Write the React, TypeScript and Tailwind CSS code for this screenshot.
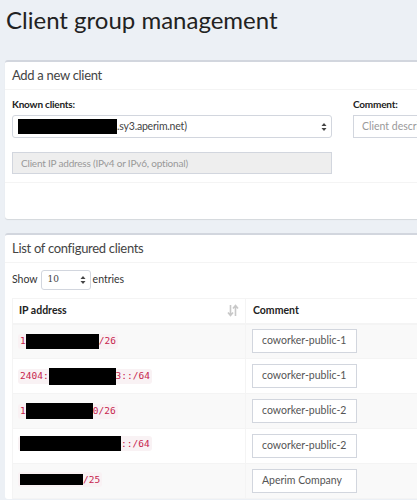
const rows = [
  { pre: "1", black: 73, post: "/26", blackH: 15, comment: "coworker-public-1" },
  { pre: "2404:", black: 67, post: "3::/64", blackH: 17, comment: "coworker-public-1" },
  { pre: "1", black: 67, post: "0/26", blackH: 16, comment: "coworker-public-2" },
  { pre: "", black: 101, post: "::/64", blackH: 15, comment: "coworker-public-2" },
  { pre: "", black: 63, post: "/25", blackH: 11, comment: "Aperim Company" },
];

function SelectArrows() {
  return (
    <svg width="6" height="10" viewBox="0 0 6 10" className="shrink-0">
      <path d="M3 1 L5.5 4 L0.5 4 Z" fill="#444" />
      <path d="M3 9 L5.5 6 L0.5 6 Z" fill="#444" />
    </svg>
  );
}

function SortIcon() {
  return (
    <svg width="12" height="13" viewBox="0 0 12 13">
      <path d="M3.5 1 V11 M1 8.5 L3.5 11.5 L6 8.5" stroke="#c8c8c8" strokeWidth="1.6" fill="none" />
      <path d="M8.5 12 V2 M6 4.5 L8.5 1.5 L11 4.5" stroke="#c8c8c8" strokeWidth="1.6" fill="none" />
    </svg>
  );
}

export default function App() {
  return (
    <div
      className="w-[417px] h-[500px] overflow-hidden bg-[#ecf0f5] text-[#333]"
      style={{ fontFamily: "Lato, 'Open Sans', sans-serif" }}
    >
      <div className="w-[560px]">
        <h1 className="pl-[6px] pt-[4px] h-[60px] text-[24px] leading-[32px] text-[#222] font-normal">
          Client group management
        </h1>

        {/* add client box */}
        <div className="ml-[5px] bg-white border-t-2 border-[#d2d6de] rounded-[3px] shadow-[0_1px_1px_rgba(0,0,0,0.1)]">
          <div className="h-[28px] px-[7px] flex items-center border-b border-[#f4f4f4] text-[13px] tracking-[-0.3px] text-[#444]">
            Add a new client
          </div>
          <div className="px-[7px] pt-[7px] pb-[8px] flex gap-[21px]">
            <div className="w-[320px]">
              <div className="text-[10px] font-bold text-[#222] leading-[14px] mb-[4px] tracking-[-0.2px]">Known clients:</div>
              <div className="h-[23px] border border-[#d2d6de] rounded-[3px] flex items-center pl-[5px] pr-[4px]">
                <div className="w-[99px] h-[15px] bg-black" />
                <span className="text-[10.5px] text-[#444] flex-1 tracking-[-0.2px]">.sy3.aperim.net)</span>
                <SelectArrows />
              </div>
              <div className="mt-[14px] h-[22px] border border-[#d2d6de] bg-[#eee] flex items-center px-[8px] text-[10px] tracking-[-0.2px] text-[#999]">
                Client IP address (IPv4 or IPv6, optional)
              </div>
            </div>
            <div className="w-[180px]">
              <div className="text-[10px] font-bold text-[#222] leading-[14px] mb-[4px] tracking-[-0.2px]">Comment:</div>
              <div className="h-[23px] border border-[#d2d6de] flex items-center px-[8px] text-[10.5px] text-[#999] whitespace-nowrap overflow-hidden">
                Client description
              </div>
            </div>
          </div>
          <div className="h-[37px] border-t border-[#f4f4f4]" />
        </div>

        {/* list box */}
        <div className="ml-[5px] mt-[14px] bg-white border-t-2 border-[#d2d6de] rounded-[3px]">
          <div className="h-[28px] px-[7px] flex items-center border-b border-[#f4f4f4] text-[13px] tracking-[-0.3px] text-[#444]">
            List of configured clients
          </div>
          <div className="px-[7px] pt-[7px]">
            <div className="flex items-center h-[20px] text-[10.5px] text-[#333]">
              <span>Show</span>
              <div className="ml-[3px] w-[50px] h-[20px] border border-[#d2d6de] rounded-[3px] flex items-center pl-[6px] pr-[4px]">
                <span className="flex-1 text-[9px] text-[#444]" style={{ fontFamily: "'DejaVu Serif', serif" }}>10</span>
                <SelectArrows />
              </div>
              <span className="ml-[2px]">entries</span>
            </div>
            <table className="mt-[8px] w-[520px] border-collapse border border-[#f4f4f4] text-[10.5px]">
              <thead>
                <tr className="h-[25px]">
                  <th className="w-[233px] border border-[#f4f4f4] border-b-2 text-left font-bold text-[#222] px-[6px]">
                    <div className="flex items-center justify-between">
                      <span>IP address</span>
                      <SortIcon />
                    </div>
                  </th>
                  <th className="border border-[#f4f4f4] border-b-2 text-left font-bold text-[#222] px-[7px]">Comment</th>
                </tr>
              </thead>
              <tbody>
                {rows.map((r, i) => (
                  <tr key={i} className={i % 2 === 0 ? "h-[35px] bg-[#f9f9f9]" : "h-[35px] bg-white"}>
                    <td className="border border-[#f4f4f4] px-[5px]">
                      <span
                        className="inline-flex items-center h-[15px] px-[2px] bg-[#f9f2f4] text-[#c7254e] text-[9.5px] rounded-[3px]"
                        style={{ fontFamily: "'DejaVu Sans Mono', monospace" }}
                      >
                        {r.pre && <span>{r.pre}</span>}
                        <span className="inline-block bg-black" style={{ width: r.black, height: r.blackH }} />
                        <span>{r.post}</span>
                      </span>
                    </td>
                    <td className="border border-[#f4f4f4] px-[6px]">
                      <div className="w-[105px] h-[24px] bg-white border border-[#d2d6de] flex items-center px-[9px] text-[10.5px] text-[#555] whitespace-nowrap overflow-hidden">
                        {r.comment}
                      </div>
                    </td>
                  </tr>
                ))}
              </tbody>
            </table>
          </div>
        </div>
      </div>
    </div>
  );
}
